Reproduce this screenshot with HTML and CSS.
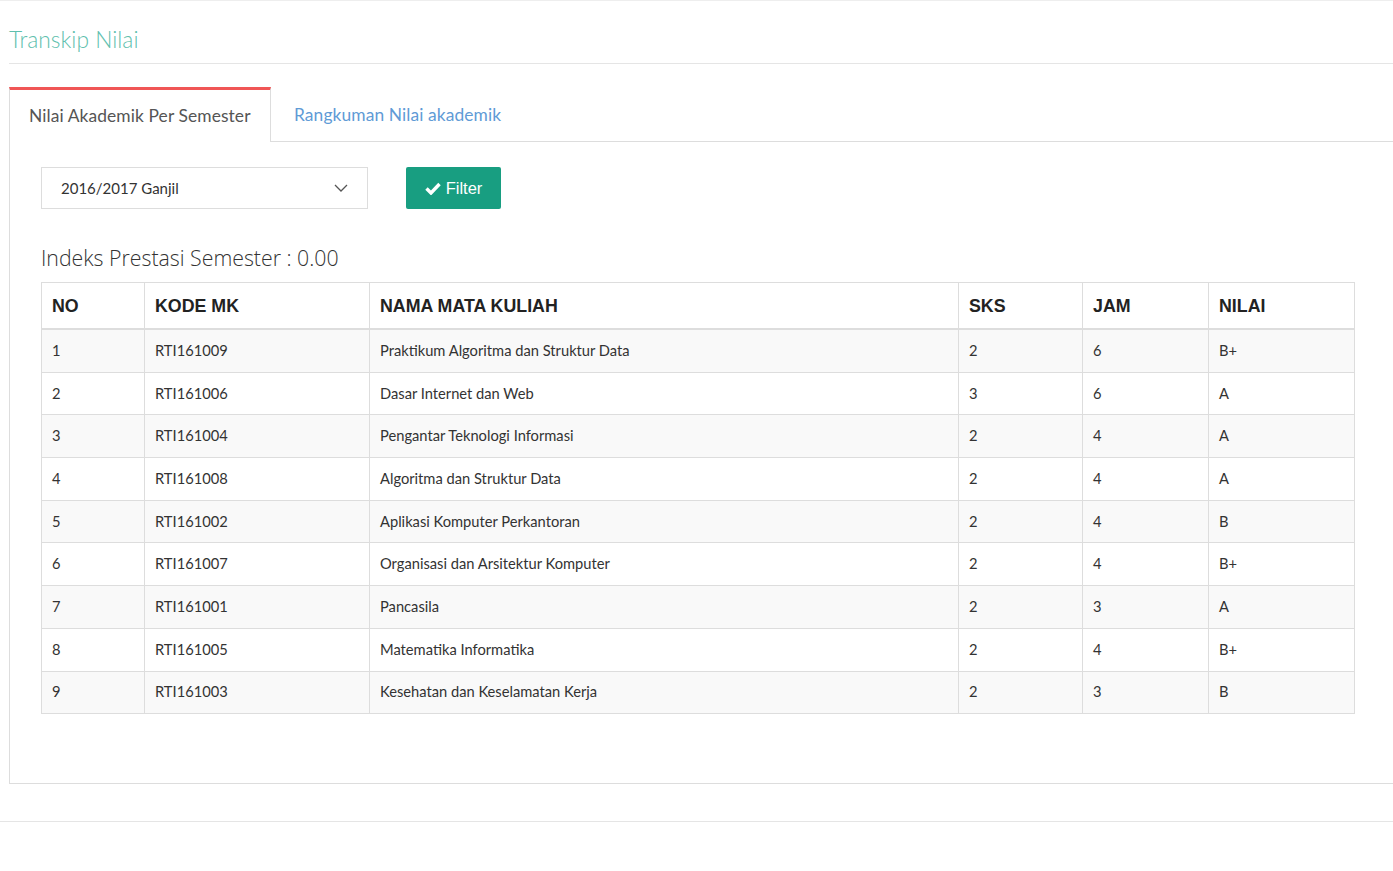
FILE: index.html
```html
<!DOCTYPE html>
<html>
<head>
<meta charset="utf-8">
<link rel="stylesheet" href="styles.css">
</head>
<body>
<div class="page">
  <div class="header">
    <h1 class="title">Transkip Nilai</h1>
  </div>
  <div class="tabs">
    <div class="tab active">Nilai Akademik Per Semester</div>
    <div class="tab link">Rangkuman Nilai akademik</div>
    <div class="tab-fill"></div>
  </div>
  <div class="panel">
    <div class="filters">
      <div class="select">
        <span>2016/2017 Ganjil</span>
        <svg class="chev" width="14" height="8" viewBox="0 0 14 8"><path d="M1 1l6 6 6-6" fill="none" stroke="#555" stroke-width="1.3"/></svg>
      </div>
      <button class="btn">
        <svg width="16" height="13" viewBox="0 0 16 13"><path d="M1.5 6.5l4.5 4.5L14.5 2" fill="none" stroke="#fff" stroke-width="3.4"/></svg>
        Filter
      </button>
    </div>
    <h2 class="ips">Indeks Prestasi Semester : 0.00</h2>
    <table class="grid">
      <colgroup>
        <col style="width:103px"><col style="width:225px"><col style="width:589px"><col style="width:124px"><col style="width:126px"><col style="width:146px">
      </colgroup>
      <thead>
        <tr><th>NO</th><th>KODE MK</th><th>NAMA MATA KULIAH</th><th>SKS</th><th>JAM</th><th>NILAI</th></tr>
      </thead>
      <tbody>
        <tr><td>1</td><td>RTI161009</td><td>Praktikum Algoritma dan Struktur Data</td><td>2</td><td>6</td><td>B+</td></tr>
        <tr><td>2</td><td>RTI161006</td><td>Dasar Internet dan Web</td><td>3</td><td>6</td><td>A</td></tr>
        <tr><td>3</td><td>RTI161004</td><td>Pengantar Teknologi Informasi</td><td>2</td><td>4</td><td>A</td></tr>
        <tr><td>4</td><td>RTI161008</td><td>Algoritma dan Struktur Data</td><td>2</td><td>4</td><td>A</td></tr>
        <tr><td>5</td><td>RTI161002</td><td>Aplikasi Komputer Perkantoran</td><td>2</td><td>4</td><td>B</td></tr>
        <tr><td>6</td><td>RTI161007</td><td>Organisasi dan Arsitektur Komputer</td><td>2</td><td>4</td><td>B+</td></tr>
        <tr><td>7</td><td>RTI161001</td><td>Pancasila</td><td>2</td><td>3</td><td>A</td></tr>
        <tr><td>8</td><td>RTI161005</td><td>Matematika Informatika</td><td>2</td><td>4</td><td>B+</td></tr>
        <tr><td>9</td><td>RTI161003</td><td>Kesehatan dan Keselamatan Kerja</td><td>2</td><td>3</td><td>B</td></tr>
      </tbody>
    </table>
  </div>
</div>
<div class="footer-line"></div>
</body>
</html>
```

FILE: styles.css
```css
html, body {
  margin: 0;
  padding: 0;
  background: #fff;
  font-family: "Lato", "Open Sans", sans-serif;
  color: #333;
  overflow: hidden;
}
.page {
  border-top: 1px solid #eee;
  padding-left: 9px;
  width: 1400px;
}
.header {
  border-bottom: 1px solid #e5e5e5;
  height: 62px;
  display: flex;
  align-items: center;
}
.title {
  margin: 0;
  font-family: "Lato", sans-serif;
  font-weight: 300;
  font-size: 22.8px;
  color: #5fbfae;
  padding-top: 14px;
}
.tabs {
  display: flex;
  margin-top: 23px;
  height: 55px;
}
.tab {
  display: flex;
  align-items: center;
  font-size: 17.4px;
  letter-spacing: 0.1px;
  box-sizing: border-box;
}
.tab.active {
  width: 262px;
  border-top: 3px solid #f05656;
  border-left: 1px solid #ddd;
  border-right: 1px solid #ddd;
  padding-left: 19px;
  padding-bottom: 2px;
  color: #555;
  background: #fff;
}
.tab.link {
  color: #5f9bd6;
  padding-left: 23px;
  padding-right: 22px;
  border-bottom: 1px solid #ddd;
}
.tab-fill {
  flex: 1;
  border-bottom: 1px solid #ddd;
}
.panel {
  border-left: 1px solid #ddd;
  border-bottom: 1px solid #ddd;
  padding: 25px 0 69px 31px;
}
.filters {
  display: flex;
  gap: 38px;
}
.select {
  width: 327px;
  height: 42px;
  box-sizing: border-box;
  border: 1px solid #ddd;
  display: flex;
  align-items: center;
  justify-content: space-between;
  padding: 0 19px 0 19px;
  font-size: 15px;
  color: #333;
}
.btn {
  width: 95px;
  height: 42px;
  border: none;
  border-radius: 2px;
  background: #189e81;
  color: #fff;
  font-family: "Liberation Sans", Arial, sans-serif;
  font-size: 16.5px;
  display: flex;
  align-items: center;
  justify-content: center;
  gap: 5px;
  padding: 0;
}
.ips {
  margin: 35px 0 10px 0;
  font-family: "Open Sans", sans-serif;
  font-weight: 300;
  font-size: 21.3px;
  color: #333;
  line-height: 28px;
}
.grid {
  border-collapse: collapse;
  width: 1313px;
  table-layout: fixed;
}
.grid th, .grid td {
  border: 1px solid #ddd;
  text-align: left;
  padding: 0 10px;
}
.grid th {
  font-family: "Liberation Sans", Arial, sans-serif;
  font-weight: bold;
  font-size: 17.8px;
  height: 43px;
  padding-top: 2px;
  color: #222;
  border-bottom-width: 2px;
}
.grid td {
  font-size: 14.7px;
  height: 39.7px;
  padding-bottom: 2px;
  color: #333;
}
.grid tbody tr:nth-child(odd) td {
  background: #f9f9f9;
}
.footer-line {
  margin-top: 37px;
  border-top: 1px solid #e5e5e5;
}
```
